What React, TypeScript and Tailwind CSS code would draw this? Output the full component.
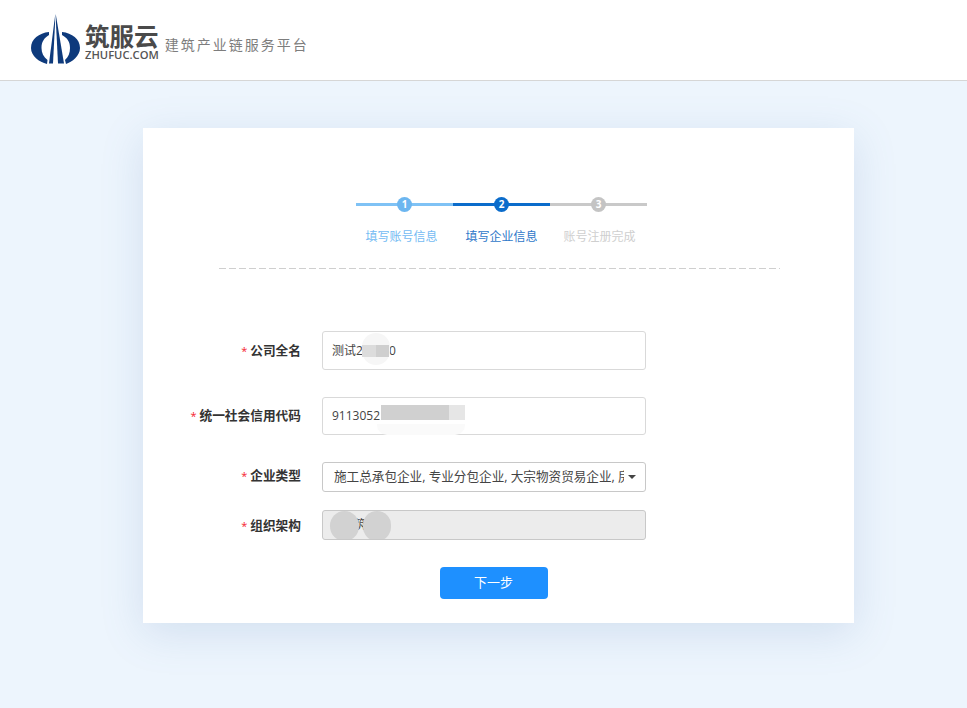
import React from 'react';

const cjk = "font-['Open_Sans','Noto_Sans_CJK_SC','Liberation_Sans',sans-serif]";

function Logo() {
  return (
    <svg width="50" height="50" viewBox="0 0 50 50" className="shrink-0 mb-[2px]">
      {/* left crescent */}
      <path d="M18 18 C8 19 0 25 0 34 C0 42 8 48 16 50 L16.5 46 C12.5 43 10.5 39 10.5 34 C10.5 28 13 24 18 21 Z" fill="#0e3a7c" />
      {/* right crescent */}
      <path d="M31 18 C41 19 49 25 49 34 C49 42 41 48 35 50 L34 46 C37.5 43 39 39 39 34 C39 28 36.5 24 31 21 Z" fill="#0e3a7c" />
      {/* spire blades */}
      <path d="M24.3 0 L18 49.5 L22 49.5 L24 10 Z" fill="#0e3a7c" />
      <path d="M24.7 0 L33 49.5 L27 49.5 L25 10 Z" fill="#0e3a7c" />
    </svg>
  );
}

function Step({ n, label, line, dot, text }: { n: number; label: string; line: string; dot: string; text: string }) {
  return (
    <div className="w-[97px] flex flex-col items-center">
      <div className="relative w-full h-[16px] flex items-center justify-center">
        <div className={`absolute inset-x-0 top-[6.5px] h-[3px] ${line}`} />
        <div className={`relative w-[15px] h-[15px] rounded-full text-white text-[10px] font-bold flex items-center justify-center ${dot}`}>{n}</div>
      </div>
      <div className={`mt-[17px] text-[12px] leading-[16px] whitespace-nowrap ${text}`}>{label}</div>
    </div>
  );
}

function Label({ children, className = '' }: { children: React.ReactNode; className?: string }) {
  return (
    <div className={`w-[158px] shrink-0 text-right mr-[21px] text-[12.7px] font-bold text-[#333] ${className}`}>
      <span className="text-[#f5222d] text-[11px] font-normal mr-[3px]">*</span>
      {children}
    </div>
  );
}

export default function App() {
  return (
    <div className={`min-h-[708px] bg-[#edf5fd] ${cjk}`}>
      <header className="h-[81px] bg-white border-b border-[#d6d6d6] flex items-center pl-[31px]">
        <Logo />
        <div className="ml-[4px] flex flex-col mt-[4px]">
          <span className="text-[24.5px] leading-[25px] font-bold text-[#4a4a4a]">筑服云</span>
          <span className="text-[11.2px] leading-[12px] font-semibold text-[#555] font-['Open_Sans',sans-serif] whitespace-nowrap">ZHUFUC.COM</span>
        </div>
        <span className="ml-[6px] mt-[8px] text-[14px] text-[#7d7d7d] tracking-[2px] font-['Noto_Sans_CJK_SC',serif]">建筑产业链服务平台</span>
      </header>

      <main className="pt-[47px] pl-[30px] flex justify-center">
        <div className="w-[711px] h-[495px] bg-white shadow-[0_10px_40px_rgba(90,130,180,0.18)] pt-[68px] flex flex-col items-center">
          <div className="flex ml-[6px]">
            <Step n={1} label="填写账号信息" line="bg-[#7fc2f5]" dot="bg-[#6cb6f0]" text="text-[#74bbf3] ml-[-6px]" />
            <Step n={2} label="填写企业信息" line="bg-[#0b6ccb]" dot="bg-[#0b6ccb]" text="text-[#2f78c9]" />
            <Step n={3} label="账号注册完成" line="bg-[#c9c9c9]" dot="bg-[#c4c4c4]" text="text-[#cfcfcf] ml-[2px]" />
          </div>
          <div className="w-[561px] h-px mt-[23px] ml-[1px] bg-[repeating-linear-gradient(90deg,#cfcfcf_0px,#cfcfcf_7px,transparent_7px,transparent_10px)]" />

          <div className="w-full mt-[62px]">
            <div className="flex items-center h-[39px]">
              <Label>公司全名</Label>
              <div className="relative w-[324px] h-[39px] border border-[#d9d9d9] rounded-[3px] flex items-center pl-[9px] text-[12px] text-[#444]">
                测试2<span className="ml-[26px]">0</span>
                <div className="absolute left-[39px] top-[1px] w-[28px] h-[32px] rounded-full bg-[#f6f6f6]" />
                <div className="absolute left-[39px] top-[13px] w-[14px] h-[12px] bg-[#dcdcdc]" />
                <div className="absolute left-[53px] top-[13px] w-[13px] h-[12px] bg-[#cfcfcf]" />
              </div>
            </div>

            <div className="flex items-center h-[38px] mt-[27px]">
              <Label>统一社会信用代码</Label>
              <div className="relative w-[324px] h-[38px] border border-[#d9d9d9] rounded-[3px] flex items-center pl-[9px] text-[12px] text-[#444]">
                9113052
                <div className="absolute left-[54px] top-[26px] w-[88px] h-[11px] rounded-b-[10px] bg-[#fafafa]" />
                <div className="absolute left-[58px] top-[7px] w-[68px] h-[15px] bg-[#d0d0d0]" />
                <div className="absolute left-[126px] top-[7px] w-[16px] h-[15px] bg-[#e6e6e6]" />
              </div>
            </div>

            <div className="flex items-center h-[30px] mt-[27px]">
              <Label className="pb-[2px]">企业类型</Label>
              <div className="w-[324px] h-[30px] border border-[#c8c8c8] rounded-[3px] flex items-center pl-[11px] pr-[9px] text-[12.6px] text-[#444]">
                <span className="flex-1 overflow-hidden whitespace-nowrap">施工总承包企业, 专业分包企业, 大宗物资贸易企业, 房地产开发企业</span>
                <span className="ml-[4px] w-0 h-0 border-x-[4px] border-x-transparent border-t-[4px] border-t-[#444]" />
              </div>
            </div>

            <div className="flex items-center h-[30px] mt-[18px]">
              <Label className="pt-[2px]">组织架构</Label>
              <div className="relative w-[324px] h-[30px] border border-[#c8c8c8] rounded-[3px] bg-[#ececec] overflow-hidden flex items-center pl-[31px] text-[12px] text-[#444]">
                筑
                <div className="absolute left-[7px] top-0 w-[29px] h-[30px] rounded-full bg-[#d2d2d2]" />
                <div className="absolute left-[40px] top-0 w-[28px] h-[30px] rounded-full bg-[#d2d2d2]" />
              </div>
            </div>

            <div className="flex justify-center mt-[27px]">
              <button className="w-[108px] h-[32px] ml-[-10px] bg-[#1e90ff] rounded-[4px] text-white text-[13px]">下一步</button>
            </div>
          </div>
        </div>
      </main>
    </div>
  );
}
